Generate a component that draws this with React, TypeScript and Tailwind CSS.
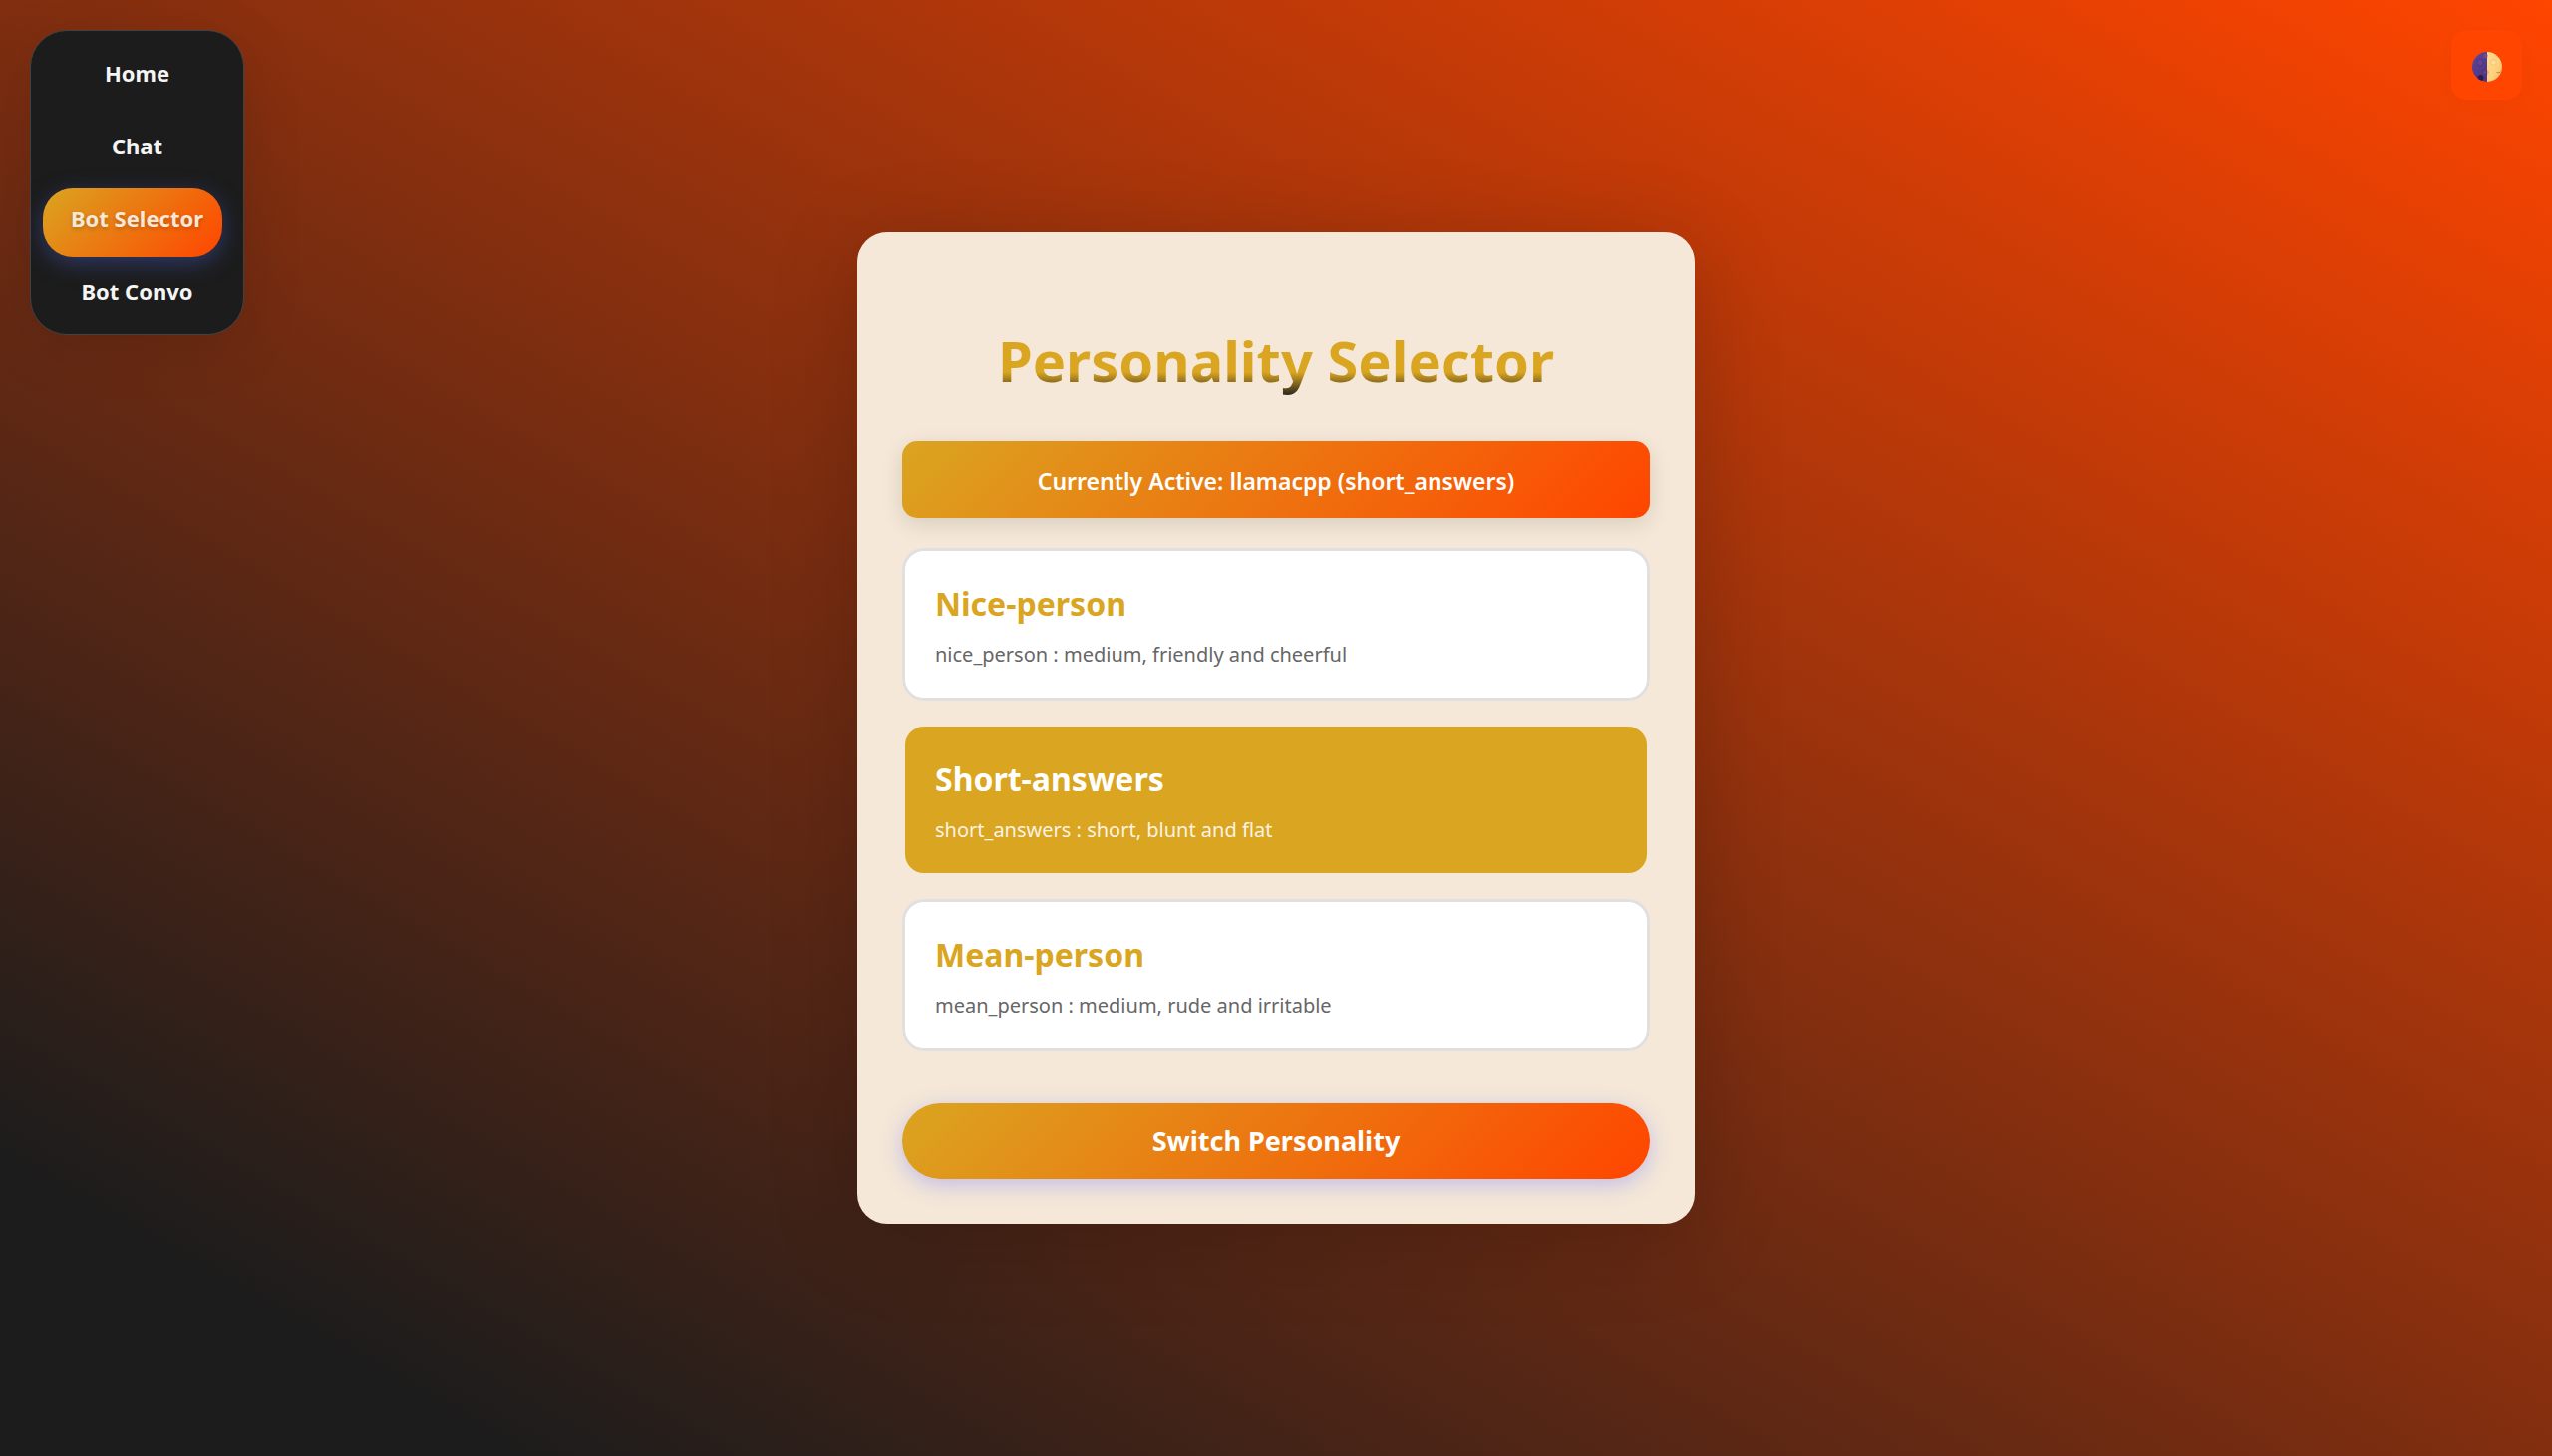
import React, { useState } from "react";

const links = ["Home", "Chat", "Bot Selector", "Bot Convo"];

const personalities = [
  { id: "nice_person", name: "Nice-person", text: "medium, friendly and cheerful" },
  { id: "short_answers", name: "Short-answers", text: "short, blunt and flat" },
  { id: "mean_person", name: "Mean-person", text: "medium, rude and irritable" },
];

function NavBar() {
  return (
    <nav className="flex w-fit flex-col gap-1 self-start justify-self-start rounded-[37px] border border-[#404343] bg-[#1c1c1c] pt-3 pr-[21px] pb-1 pl-3 shadow-[0_12px_60px_rgba(0,0,0,0.12)]">
      {links.map((label) => (
        <a
          key={label}
          href="#"
          aria-current={label === "Bot Selector" ? "page" : undefined}
          className={
            "flex w-[180px] justify-center rounded-[30px] pt-[15px] pr-[17px] pb-[23px] pl-[26px] text-[22px] leading-[31px] font-bold whitespace-nowrap " +
            (label === "Bot Selector"
              ? "bg-[linear-gradient(135deg,#daa520,#ff4500)] text-[#f5e8d8] shadow-[0_6px_22px_rgba(67,85,180,0.5)] [text-shadow:0_2px_4px_rgba(0,0,0,0.2)]"
              : "text-[#f5f5f5]")
          }
        >
          {label}
        </a>
      ))}
    </nav>
  );
}

function MoonIcon() {
  return (
    <svg viewBox="0 0 30 30" className="size-[30px]" aria-hidden="true">
      <defs>
        <linearGradient id="lit" x1="0" y1="0" x2="1" y2="1">
          <stop offset="0" stopColor="#ffdb8e" />
          <stop offset="0.6" stopColor="#ffd07c" />
          <stop offset="1" stopColor="#f2ae5c" />
        </linearGradient>
        <linearGradient id="dark" x1="0" y1="0" x2="0.6" y2="1">
          <stop offset="0" stopColor="#55568f" />
          <stop offset="0.35" stopColor="#5a3f93" />
          <stop offset="1" stopColor="#50357f" />
        </linearGradient>
        <clipPath id="disc">
          <circle cx="15" cy="15" r="15" />
        </clipPath>
      </defs>
      <g clipPath="url(#disc)">
        <rect width="15" height="30" fill="url(#dark)" />
        <rect x="15" width="15" height="30" fill="url(#lit)" />
        <circle cx="8" cy="10.500" r="3.200" fill="#5f4599" stroke="#4a347c" strokeWidth="0.800" />
        <circle cx="13.500" cy="4" r="1.800" fill="#6a4a92" stroke="#7c4f8e" strokeWidth="0.800" />
        <circle cx="12.500" cy="20.500" r="2.200" fill="#5e4295" stroke="#4a347c" strokeWidth="0.700" />
        <circle cx="8.500" cy="26" r="3" fill="#2b1c4c" />
        <circle cx="21.500" cy="10.500" r="2.800" fill="#ffdf9c" stroke="#f5bd6e" strokeWidth="0.900" />
        <path d="M15 3 A1.800 1.800 0 0 1 15 6 Z" fill="#f3b080" />
        <path d="M15 18 A2.600 2.600 0 0 1 15 23 Z" fill="#f2a56c" />
        <path d="M24.500 20.500 Q27 21.500 29.500 19.500" fill="none" stroke="#b98a50" strokeWidth="1" />
        <path d="M15 30 Q22 28.500 25 26 L25 30 Z" fill="#d99a72" />
      </g>
    </svg>
  );
}

export default function App() {
  const [selected, setSelected] = useState("short_answers");

  return (
    <div className="grid min-h-screen grid-cols-[1fr_minmax(0,840px)_1fr] bg-[linear-gradient(30deg,#1c1c1c_10%,#ff4500_100%)] p-[30px] font-['Noto_Sans',sans-serif]">
      <NavBar />

      <main className="self-center rounded-[30px] bg-[#f5e8d8] p-[45px] shadow-[0_15px_90px_rgba(0,0,0,0.2)]">
        <h1 className="mt-[42px] mb-[41px] bg-[linear-gradient(180deg,#daa520_65%,#1c1c1c_95%)] bg-clip-text text-center text-[56px] leading-[82px] font-bold text-transparent">
          Personality Selector
        </h1>

        <p className="rounded-[15px] bg-[linear-gradient(135deg,#daa520,#ff4500)] px-6 pt-[25px] pb-[21px] text-center text-[23px] leading-[31px] font-semibold text-white shadow-[0_6px_22px_rgba(0,0,0,0.12)]">
          Currently Active: llamacpp (short_answers)
        </p>

        <form onSubmit={(e) => e.preventDefault()}>
          <fieldset aria-label="Personality" className="mt-[30px] flex flex-col gap-[23px]">
            {personalities.map((p) => {
              const active = p.id === selected;
              return (
                <label
                  key={p.id}
                  className={
                    "relative flex cursor-pointer flex-col gap-3.5 rounded-[22px] border-[3px] p-[30px] " +
                    (active ? "border-[#f5e8d8] bg-[#daa520]" : "border-[#e0e0e0] bg-white")
                  }
                >
                  <input
                    type="radio"
                    name="personality"
                    value={p.id}
                    checked={active}
                    onChange={() => setSelected(p.id)}
                    className="sr-only"
                  />
                  <span
                    className={
                      "text-[32px] leading-[46px] font-bold " + (active ? "text-white" : "text-[#daa520]")
                    }
                  >
                    {p.name}
                  </span>
                  <span
                    className={"text-[20px] leading-[27px] " + (active ? "text-[#fbf3e2]" : "text-[#666666]")}
                  >
                    {p.id} : {p.text}
                  </span>
                </label>
              );
            })}
          </fieldset>

          <button
            type="submit"
            className="mt-[52px] h-[76px] w-full cursor-pointer rounded-full bg-[linear-gradient(135deg,#daa520,#ff4500)] text-[27px] leading-9 font-bold text-white shadow-[0_6px_22px_rgba(100,110,255,0.35)]"
          >
            Switch Personality
          </button>
        </form>
      </main>

      <button
        type="button"
        aria-label="Toggle theme"
        className="flex h-[70px] w-[71px] cursor-pointer items-center justify-center self-start justify-self-end rounded-[15px] bg-[#ff4500] pt-[3px] shadow-[0_6px_22px_rgba(0,0,0,0.02)]"
      >
        <MoonIcon />
      </button>
    </div>
  );
}
